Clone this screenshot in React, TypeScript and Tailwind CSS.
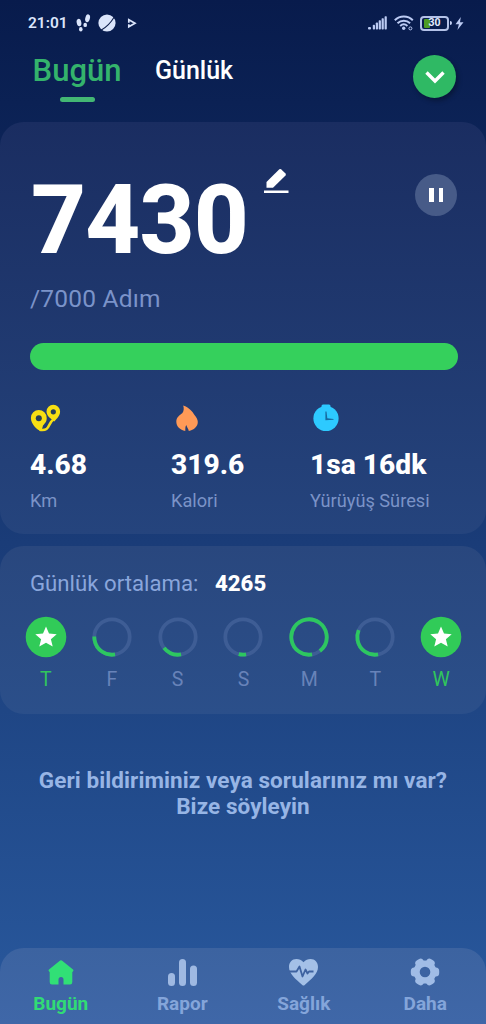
import type { ReactNode } from "react";
import clsx from "clsx";

type Day = { label: string; done?: boolean; sweep?: number };

// sweep: Grad des Tagesfortschritts, beginnend unten, im Uhrzeigersinn
const days: Day[] = [
  { label: "T", done: true },
  { label: "F", sweep: 102 },
  { label: "S", sweep: 62 },
  { label: "S", sweep: 24 },
  { label: "M", sweep: 332 },
  { label: "T", sweep: 123 },
  { label: "W", done: true },
];

function StatusBar() {
  return (
    <div className="flex h-[46px] items-center justify-between pl-[28px] pr-[22px] text-[#dbe5fb]">
      <div className="flex items-center">
        <span className="mt-[2px] w-[38px] whitespace-nowrap text-[15.500px] font-semibold leading-none">21:01</span>
        <svg className="ml-[10px]" width="15" height="18" viewBox="0 0 15 18" fill="currentColor">
          <ellipse cx="3" cy="8.600" rx="2.300" ry="3.800" transform="rotate(-12 3 8.600)" />
          <ellipse cx="4.800" cy="15.200" rx="1.800" ry="2.200" />
          <ellipse cx="11.600" cy="4.300" rx="2.300" ry="4" transform="rotate(14 11.600 4.300)" />
          <ellipse cx="9.200" cy="10.900" rx="1.800" ry="2.200" />
        </svg>
        <svg className="ml-[7px]" width="18" height="18" viewBox="0 0 18 18">
          <circle cx="9" cy="9" r="8.600" fill="currentColor" />
          <path d="M3 16.200C8 13.500 13 8.500 16.200 3" fill="none" stroke="#10204c" strokeWidth="1.100" />
        </svg>
        <svg className="ml-[11px]" width="11" height="11" viewBox="0 0 11 11" fill="none">
          <path d="M1.800 4.800V1.800L8 5.300L1.800 8.800V6.200" stroke="currentColor" strokeWidth="1.700" />
        </svg>
      </div>

      <div className="flex items-center text-[#bccbf3]">
        <svg width="19" height="14" viewBox="0 0 19 14" fill="currentColor">
          <rect x="0" y="11" width="3" height="2.500" rx="1" />
          <rect x="4.800" y="8.700" width="2.200" height="4.800" rx="0.700" />
          <rect x="7.800" y="6.500" width="2.200" height="7" rx="0.700" />
          <rect x="10.700" y="4.300" width="2.200" height="9.200" rx="0.700" />
          <rect x="13.600" y="2.300" width="2.200" height="11.200" rx="0.700" />
          <rect x="16.600" y="0.300" width="2.200" height="13.200" rx="0.700" />
        </svg>
        <svg className="ml-[7px]" width="20" height="16" viewBox="0 0 20 16" fill="none" stroke="currentColor" strokeWidth="2">
          <path d="M0.800 5.200C5.800 0.300 13.800 0.300 18.800 5.200" />
          <path d="M3.500 8.200C7 4.900 12.600 4.900 16.100 8.200" />
          <path d="M6.200 10.900C8.300 9 11.300 9 13.400 10.900" />
          <circle cx="9.700" cy="13.200" r="1.700" fill="currentColor" stroke="none" />
          <circle cx="16.400" cy="13.400" r="1.500" strokeWidth="1" />
        </svg>
        <div className="ml-[6px] flex items-center">
          <div className="relative flex h-[15px] w-[29px] items-center justify-center rounded-[4px] border-2 border-[#b4c2e8]">
            <div className="absolute left-[2px] top-[1px] h-[9px] w-[6px] rounded-[1px] bg-[#4d9c24]" />
            <span className="relative mt-px text-[10.500px] font-bold leading-none text-[#e3ebfd]">30</span>
          </div>
          <div className="ml-px h-[4px] w-[2px] rounded-r bg-[#c4d1f5]" />
        </div>
        <svg className="ml-[3px]" width="9" height="13" viewBox="0 0 9 13" fill="currentColor">
          <path d="M5.800 0L0.500 7.200H3.900L2.400 13L8.500 5.200H5L5.800 0Z" />
        </svg>
      </div>
    </div>
  );
}

function Header() {
  return (
    <header className="flex h-[76px] items-start justify-between pl-[33px] pr-[30px]">
      <div className="flex">
        <div className="flex w-[88px] flex-col items-center">
          <span className="h-[51px] whitespace-nowrap text-[31px] font-medium leading-[50px] text-[#34b36c]">Bugün</span>
          <span className="h-[5px] w-[35px] rounded-full bg-[#43b774]" />
        </div>
        <span className="ml-[34px] whitespace-nowrap text-[25px] font-medium leading-[49px] text-white">Günlük</span>
      </div>
      <button className="mt-[9px] flex h-[43px] w-[43px] items-center justify-center rounded-full bg-[#2fb964] shadow-[2px_3px_5px_rgba(0,0,0,0.3)]">
        <svg width="20" height="14" viewBox="0 0 20 14" fill="none">
          <path d="M1.500 2.500L10 11L18.500 2.500" stroke="#fff" strokeWidth="3.400" />
        </svg>
      </button>
    </header>
  );
}

function Stat({ icon, value, label }: { icon: ReactNode; value: string; label: string }) {
  return (
    <div className="whitespace-nowrap">
      <div className="flex h-8 items-center">{icon}</div>
      <div className="mt-[14px] text-[28.200px] font-extrabold leading-[33px] text-white">{value}</div>
      <div className="text-[18.200px] leading-10 text-[#7b93c7]">{label}</div>
    </div>
  );
}

function RouteIcon() {
  return (
    <svg width="31" height="28" viewBox="0 0 31 28">
      <path d="M9.500 25.800C21 27.500 17 19.500 24 15" fill="none" stroke="#f7df13" strokeWidth="2.600" />
      <path d="M8.800 6a7.900 7.900 0 0 1 7.900 7.900c0 3.800-1.500 5-3.700 7.600L11.500 27C6.500 26 0.900 19.500 0.900 13.900A7.900 7.900 0 0 1 8.800 6Z" fill="#f7df13" />
      <path d="M23.300 0.800a6.800 6.800 0 0 1 6.800 6.800c0 4.200-2.800 6.500-5.800 10C21 15 16.500 12 16.500 7.600A6.800 6.800 0 0 1 23.300 0.800Z" fill="#f7df13" />
      <circle cx="8.800" cy="14.200" r="3" fill="#263f57" />
      <circle cx="23.300" cy="7.800" r="2.600" fill="#263f57" />
    </svg>
  );
}

function FlameIcon() {
  return (
    <svg className="ml-[5px]" width="22" height="27" viewBox="0 0 22 27">
      <path d="M7.200 0.500C13 2.500 16.500 6.500 18.500 10C20.500 12.500 21.800 14.500 21.800 17C21.800 21.500 18 25 12.800 26C12.300 23.500 10.800 22.300 10.300 20C9.200 21.500 9.300 24 9.300 26C4 24.800 0.300 21.500 0.300 16.500C0.300 12 4.500 9.700 6.200 8.200C7.800 6.500 8.200 3.500 7.200 0.500Z" fill="#ff9a57" />
    </svg>
  );
}

function ClockIcon() {
  return (
    <svg className="ml-[3px]" width="26" height="28" viewBox="0 0 26 28">
      <rect x="8.500" y="0.500" width="9" height="5" rx="1.500" fill="#2dcaff" />
      <circle cx="13" cy="14.500" r="12.600" fill="#2dcaff" />
      <path d="M12.400 7.500H13.500L14.300 14.200L20.500 14.900V15.800L12.400 16.200Z" fill="#176a9f" />
    </svg>
  );
}

function StepsCard() {
  return (
    <section className="h-[412px] rounded-[24px] bg-linear-to-b from-[#1a2d61] to-[#25447d] px-[30px] pt-[42px]">
      <div className="flex h-[112px] justify-between">
        <div className="flex">
          <span className="w-[216px] whitespace-nowrap pl-[1px] text-[95.500px] font-extrabold leading-[112px] tracking-[-0.800px] text-white">7430</span>
          <svg className="ml-[18px] mt-[4px]" width="25" height="26" viewBox="0 0 25 26" fill="#fff">
            <path d="M2.500 19.800V14L15.300 1.300Q16.200 0.500 17.100 1.300L21.500 5.600Q22.300 6.500 21.500 7.400L9 19.800Z" />
            <rect x="0" y="22.500" width="24.500" height="2.500" />
          </svg>
        </div>
        <button className="mr-[-1px] mt-[10px] flex h-[42px] w-[42px] items-center justify-center gap-[5px] rounded-full bg-[#475b88]">
          <span className="h-[14px] w-[4.500px] bg-white" />
          <span className="h-[14px] w-[4.500px] bg-white" />
        </button>
      </div>
      <div className="text-[24.500px] leading-[46px] tracking-[0.200px] text-[#7b93c9]">/7000 Adım</div>
      <div className="mr-[-2px] mt-[21px] h-[27px] rounded-full bg-[#35d05c]" />
      <div className="mt-8 grid grid-cols-[141px_139px_1fr]">
        <Stat icon={<RouteIcon />} value="4.68" label="Km" />
        <Stat icon={<FlameIcon />} value="319.6" label="Kalori" />
        <Stat icon={<ClockIcon />} value="1sa 16dk" label="Yürüyüş Süresi" />
      </div>
    </section>
  );
}

function DayRing({ day }: { day: Day }) {
  return (
    <div className="flex flex-col items-center">
      <svg width="42" height="42" viewBox="0 0 42 42">
        {day.done ? (
          <>
            <circle cx="21" cy="21" r="20.300" fill="#31cb58" />
            <path d="M21 10.500L24 17.500L31.700 18.200L25.900 23.200L27.700 30.600L21 26.700L14.300 30.600L16.100 23.200L10.300 18.200L18 17.500Z" fill="#fff" />
          </>
        ) : (
          <>
            <circle cx="21" cy="21" r="17.700" fill="none" stroke="#3e5d95" strokeWidth="3.800" />
            <circle
              cx="21"
              cy="21"
              r="17.700"
              fill="none"
              stroke="#2dc760"
              strokeWidth="3.800"
              pathLength={360}
              strokeDasharray={`${day.sweep} 360`}
              transform="rotate(80 21 21)"
            />
          </>
        )}
      </svg>
      <span className={clsx("mt-[6px] text-[19.500px] leading-[32px]", day.done ? "text-[#31c65c]" : "text-[#6883b9]")}>
        {day.label}
      </span>
    </div>
  );
}

function AverageCard() {
  return (
    <section className="mt-3 h-[168px] rounded-[24px] bg-linear-to-b from-[#29477e] to-[#2b4f8a] pt-[17px]">
      <div className="flex whitespace-nowrap pl-[30px] leading-[40px]">
        <span className="w-[185px] text-[22.200px] text-[#8aa6dc]">Günlük ortalama:</span>
        <span className="text-[22.200px] font-extrabold leading-[41px] text-white">4265</span>
      </div>
      <div className="ml-[13px] mr-[12px] mt-[12px] grid grid-cols-7">
        {days.map((day, i) => (
          <DayRing key={i} day={day} />
        ))}
      </div>
    </section>
  );
}

function NavItem({ icon, label, active }: { icon: ReactNode; label: string; active?: boolean }) {
  return (
    <button className={clsx("flex flex-col items-center", active ? "text-[#31db75]" : "text-[#84a5da]")}>
      <span className="flex h-[28px] items-center">{icon}</span>
      <span className="mt-[4px] text-[19px] font-bold leading-[28px]">{label}</span>
    </button>
  );
}

function BottomNav() {
  return (
    <nav className="grid h-[76px] grid-cols-4 items-start rounded-t-[24px] bg-linear-to-b from-[#3c63a0] to-[#3f67a8] pt-[10px]">
      <NavItem
        active
        label="Bugün"
        icon={
          <svg width="26" height="25" viewBox="0 0 26 25" fill="#31e076">
            <path d="M11.500 0.900Q13 -0.300 14.500 0.900L25 9.500Q26 10.700 24.700 11.700L24.300 12V22Q24.300 24.500 22 24.500H15.500V19.500Q15.500 17 13 17Q10.500 17 10.500 19.500V24.500H4Q1.700 24.500 1.700 22V12L1.300 11.700Q0 10.700 1 9.500Z" />
          </svg>
        }
      />
      <NavItem
        label="Rapor"
        icon={
          <svg width="29" height="27" viewBox="0 0 29 27" fill="#9fb9e2">
            <rect x="0" y="14" width="7" height="13" rx="3.500" />
            <rect x="11" y="0" width="7" height="27" rx="3.500" />
            <rect x="22" y="6.500" width="7" height="20.500" rx="3.500" />
          </svg>
        }
      />
      <NavItem
        label="Sağlık"
        icon={
          <svg width="29" height="27" viewBox="0 0 29 27">
            <path d="M14.500 3.300C16.500 0.700 19 0 21.500 0C26 0 29 3.500 29 8C29 14.500 22.500 20 15.700 26Q14.500 27 13.300 26C6.500 20 0 14.500 0 8C0 3.500 3 0 7.500 0C10 0 12.500 0.700 14.500 3.300Z" fill="#a4c0e7" />
            <path d="M0 12.500H7.500L10.500 7.500L13.500 17.500L16.500 10.500L18.500 14.500L20 12.500H24.500" fill="none" stroke="#3e62a0" strokeWidth="1.800" strokeLinejoin="round" />
          </svg>
        }
      />
      <NavItem
        label="Daha"
        icon={
          <svg width="30" height="28" viewBox="0 0 30 28">
            <g fill="#a0bce6">
              <circle cx="15" cy="14" r="11.500" />
              {/* sechs Zähne, aus drei abgerundeten Balken */}
              <rect x="0.800" y="9.500" width="28.400" height="9" rx="3.500" />
              <rect x="0.800" y="9.500" width="28.400" height="9" rx="3.500" transform="rotate(60 15 14)" />
              <rect x="0.800" y="9.500" width="28.400" height="9" rx="3.500" transform="rotate(120 15 14)" />
            </g>
            <circle cx="15" cy="14" r="5.300" fill="#3c63a2" />
          </svg>
        }
      />
    </nav>
  );
}

export default function App() {
  return (
    <div className="flex h-[1024px] w-[486px] flex-col overflow-hidden bg-linear-to-b from-[#081b4c] from-0% via-[#1a3c78] via-53% to-[#29599e] to-100% font-['Roboto',sans-serif]">
      <StatusBar />
      <Header />
      <StepsCard />
      <AverageCard />
      <div className="flex-1 whitespace-nowrap pt-[53px] text-center text-[22.500px] font-bold leading-[26px] tracking-[0.080px] text-[#97b5e5]">
        <p>Geri bildiriminiz veya sorularınız mı var?</p>
        <p>Bize söyleyin</p>
      </div>
      <BottomNav />
    </div>
  );
}
